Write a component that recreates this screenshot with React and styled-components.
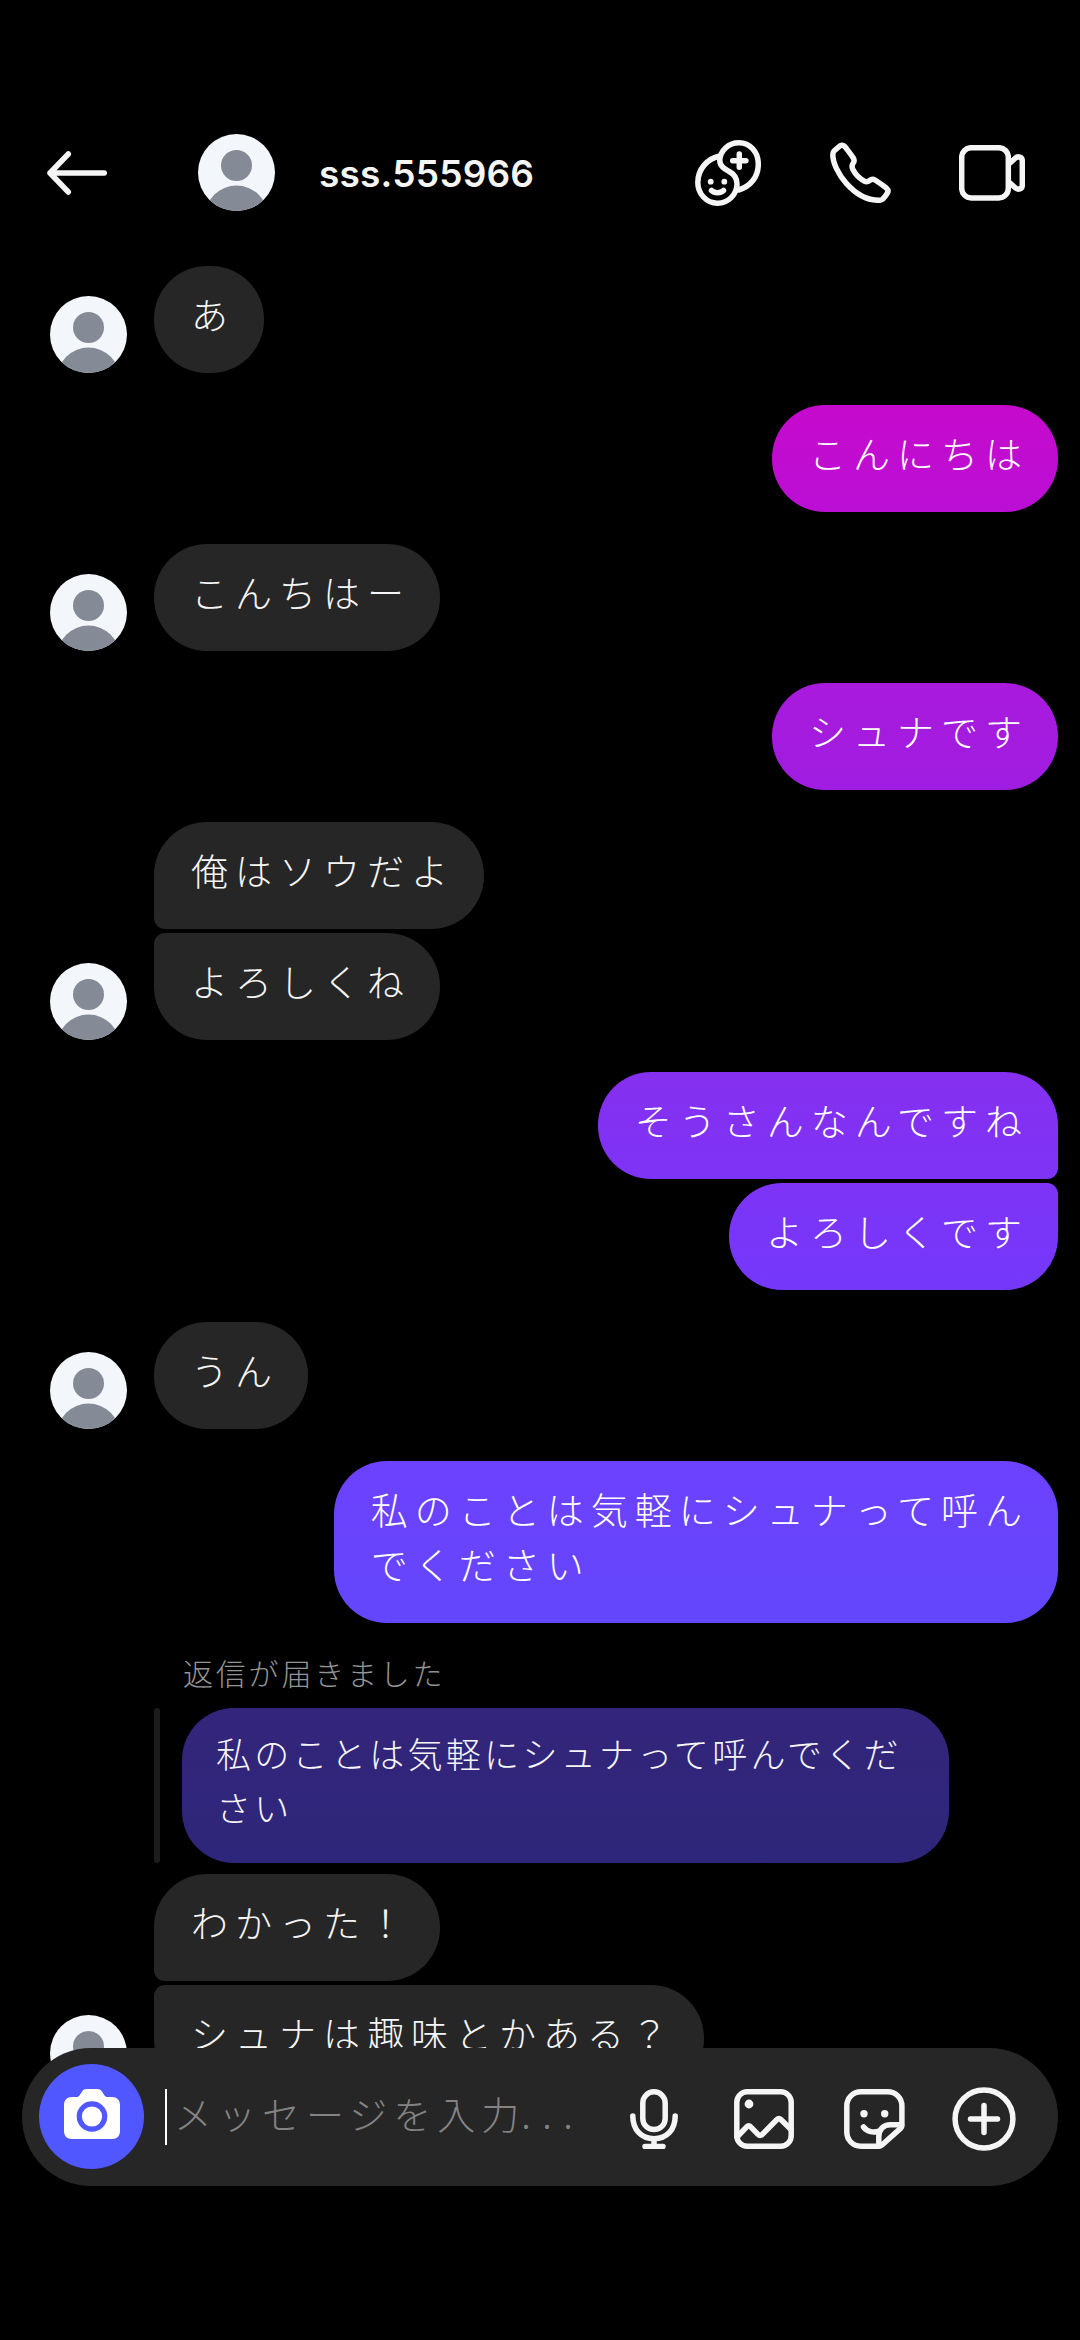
import styled, { createGlobalStyle } from 'styled-components';

const conversation = [
  { from: 'them', messages: ['あ'] },
  { from: 'me', messages: ['こんにちは'] },
  { from: 'them', messages: ['こんちはー'] },
  { from: 'me', messages: ['シュナです'] },
  { from: 'them', messages: ['俺はソウだよ', 'よろしくね'] },
  { from: 'me', messages: ['そうさんなんですね', 'よろしくです'] },
  { from: 'them', messages: ['うん'] },
  { from: 'me', messages: ['私のことは気軽にシュナって呼ん\nでください'] },
  {
    from: 'them',
    reply: {
      label: '返信が届きました',
      text: '私のことは気軽にシュナって呼んでくだ\nさい',
    },
    messages: ['わかった！', 'シュナは趣味とかある？'],
  },
];

function Avatar() {
  return (
    <AvatarCircle>
      <svg width="77" height="77" viewBox="0 0 77 77" fill="#858b96">
        <circle cx="38.5" cy="31.5" r="15.5" />
        <circle cx="38.5" cy="83" r="31.5" />
      </svg>
    </AvatarCircle>
  );
}

function BackIcon() {
  return (
    <LineIcon width="60" height="44" viewBox="0 0 60 44">
      <path d="M57.3 22H3M21.3 3L3 22l18.3 19" />
    </LineIcon>
  );
}

function AddPeopleIcon() {
  return (
    <LineIcon width="66" height="66" viewBox="0 0 66 66">
      <path d="M24.8 16C12.5 18.5 2.8 29 2.8 42.5a19.6 20.7 0 0 0 19.7 20.7A19.4 19.4 0 0 0 42 44c0-5.5-2.5-9.5-7-12-6-3.3-10.200-6-10.200-11.500A19.2 18 0 0 1 44 2.800c11 0 19.300 9.200 19.300 21.200 0 13-7.800 22.500-19.800 26" />
      <path d="M37.7 20.7h13.2M44.3 14.1v13.2M16.5 50.5c3 3 9 3 12 0" />
      <g fill="#f5f5f5" stroke="none">
        <circle cx="15.7" cy="41.7" r="2.9" />
        <circle cx="29.3" cy="41.7" r="2.9" />
      </g>
    </LineIcon>
  );
}

function PhoneIcon() {
  return (
    <LineIcon width="61" height="61" viewBox="0 0 61 61">
      <path d="M9.5 4.2C11 2.7 13.5 2.8 14.8 4.5c3 3.8 6 7.5 8.5 11.5 1.3 2 .9 3.5-.1 5-1.4 2-1.5 4-.4 6.3 2.7 5.2 6.7 9.5 11.7 11.9 2 1 3.5.6 5.3-.9 1.5-1.3 3.2-1.5 5.2-.3 4 2.5 8 5.3 11.5 8.2 1.8 1.6 2 3.1.7 5.1-1.2 2-2.7 4-4.4 5.700-1 .9-2.3 1.3-3.8 1.3C24 58.3 2.8 29 2.8 12.5c0-1.5.5-2.7 1.500-3.700z" />
    </LineIcon>
  );
}

function VideoIcon() {
  return (
    <LineIcon width="66" height="56" viewBox="0 0 66 56">
      <rect x="2.7" y="2.7" width="46.6" height="50.2" rx="9.5" />
      <path d="M51 18l5.5-5c2.5-2.2 6.8-1 6.8 2.8v24.4c0 3.8-4.3 5-6.8 2.8L51 38" />
    </LineIcon>
  );
}

function CameraIcon() {
  return (
    <svg width="56" height="50" viewBox="0 0 56 50">
      <path
        fill="#fff"
        d="M8 8h4c2 0 3-.8 4-2.3l2-3.2C19.2.8 20.5 0 22.5 0h11c2 0 3.3.8 4.5 2.5l2 3.2C41 7.2 42 8 44 8h4c5 0 8 3 8 8v26c0 5-3 8-8 8H8c-5 0-8-3-8-8V16c0-5 3-8 8-8z"
      />
      <circle cx="28" cy="27.5" r="12.7" fill="#fff" stroke="#5157ff" strokeWidth="5.2" />
    </svg>
  );
}

function MicIcon() {
  return (
    <LineIcon width="48" height="60" viewBox="0 0 48 60">
      <rect x="12.8" y="2.8" width="22.4" height="37.8" rx="11.2" />
      <path d="M2.8 27C2.8 40.5 11 49.7 24 49.7S45.2 40.5 45.2 27M24 50v7M15 57.400h18" />
    </LineIcon>
  );
}

function PictureIcon() {
  return (
    <LineIcon width="60" height="60" viewBox="0 0 60 60">
      <rect x="2.8" y="2.8" width="54.4" height="54.4" rx="10.5" />
      <path d="M3 48l9.7-10.200q2-2.200 4 0l7.300 7.500q2.200 2.200 4.400 0l14.300-14.500q2.200-2.200 4.400 0L57 40.500" />
      <circle cx="15" cy="15" r="4.4" fill="#f5f5f5" stroke="none" />
    </LineIcon>
  );
}

function StickerIcon() {
  return (
    <LineIcon width="61" height="60" viewBox="0 0 61 60">
      <path d="M34.5 57.2H17C9 57.2 2.8 51 2.8 43V17C2.8 9 9 2.8 17 2.8h26.7c8 0 14.2 6.2 14.2 14.2v19.5c0 1-.4 1.9-1.1 2.6L38 56c-.9.8-2.2 1.2-3.5 1.2z" />
      <path d="M34.8 57v-9.5c0-7 4.7-11.8 11.700-11.800H57.500M19.500 38c3.500 4.700 10 6.500 16.300 3.700" />
      <g fill="#f5f5f5" stroke="none">
        <circle cx="20" cy="24.7" r="3.7" />
        <circle cx="40.7" cy="24.7" r="3.7" />
      </g>
    </LineIcon>
  );
}

function PlusIcon() {
  return (
    <LineIcon width="64" height="64" viewBox="0 0 64 64">
      <circle cx="32" cy="32" r="28.9" />
      <path d="M18.5 32h27M32 18.5v27" />
    </LineIcon>
  );
}

function MessageGroup({ from, reply, messages }) {
  const mine = from === 'me';
  return (
    <Row $mine={mine}>
      {!mine && <Avatar />}
      <Stack $mine={mine}>
        {reply && (
          <ReplyBlock>
            <ReplyLabel>{reply.label}</ReplyLabel>
            <ReplyQuote>
              <ReplyBar />
              <ReplyBubble>{reply.text}</ReplyBubble>
            </ReplyQuote>
          </ReplyBlock>
        )}
        {messages.map((text, idx) => (
          <Bubble
            key={text}
            $mine={mine}
            $joinTop={idx > 0}
            $joinBottom={idx < messages.length - 1}
          >
            {text}
          </Bubble>
        ))}
      </Stack>
    </Row>
  );
}

function App() {
  return (
    <>
      <GlobalStyle />
      <Screen>
        <Header>
          <BackIcon />
          <Profile>
            <Avatar />
            <UserName>sss.555966</UserName>
          </Profile>
          <HeaderActions>
            <IconCell $size={66}><AddPeopleIcon /></IconCell>
            <IconCell $size={66}><PhoneIcon /></IconCell>
            <IconCell $size={66}><VideoIcon /></IconCell>
          </HeaderActions>
        </Header>

        <MessageList>
          {conversation.map((group, idx) => (
            <MessageGroup key={idx} {...group} />
          ))}
        </MessageList>

        <Composer>
          <CameraButton><CameraIcon /></CameraButton>
          <Caret />
          <Placeholder>メッセージを入力<Dots>...</Dots></Placeholder>
          <ComposerActions>
            <IconCell $size={64}><MicIcon /></IconCell>
            <IconCell $size={64}><PictureIcon /></IconCell>
            <IconCell $size={64}><StickerIcon /></IconCell>
            <IconCell $size={64}><PlusIcon /></IconCell>
          </ComposerActions>
        </Composer>
      </Screen>
    </>
  );
}

const GlobalStyle = createGlobalStyle`
  * {
    box-sizing: border-box;
  }

  body {
    margin: 0;
    background: #000;
    font-family: 'Noto Sans CJK JP', sans-serif;
  }
`;

const Screen = styled.div`
  position: relative;
  width: 1080px;
  height: 2340px;
  overflow: hidden;
  background: #000;
  color: #f5f5f5;
`;

const Header = styled.header`
  display: flex;
  align-items: center;
  height: 245px;
  padding: 100px 55px 0 47px;
`;

const Profile = styled.div`
  display: flex;
  align-items: center;
  gap: 44px;
  margin-left: 91px;
`;

const UserName = styled.span`
  padding-top: 2px;
  font-family: 'Inter', sans-serif;
  font-size: 37px;
  font-weight: 600;
  letter-spacing: 0.2px;
  line-height: 50px;
`;

const HeaderActions = styled.div`
  display: flex;
  gap: 66px;
  margin-left: auto;
`;

const IconCell = styled.div`
  display: flex;
  align-items: center;
  justify-content: center;
  width: ${({ $size }) => $size}px;
  height: ${({ $size }) => $size}px;
`;

const LineIcon = styled.svg`
  display: block;
  fill: none;
  stroke: #f5f5f5;
  stroke-width: 5.5;
  stroke-linecap: round;
  stroke-linejoin: round;
`;

const AvatarCircle = styled.div`
  flex-shrink: 0;
  width: 77px;
  height: 77px;
  border-radius: 50%;
  overflow: hidden;
  background: #f3f6fa;

  svg {
    display: block;
  }
`;

const MessageList = styled.main`
  display: flex;
  flex-direction: column;
  gap: 32px;
  padding: 21px 22px 0 50px;
`;

const Row = styled.div`
  display: flex;
  align-items: flex-end;
  justify-content: ${({ $mine }) => ($mine ? 'flex-end' : 'flex-start')};
  gap: 27px;
`;

const Stack = styled.div`
  display: flex;
  flex-direction: column;
  align-items: ${({ $mine }) => ($mine ? 'flex-end' : 'flex-start')};
  gap: 4px;
`;

const Bubble = styled.div`
  padding: 21px 29px 31px 37px;
  border-radius: 53px;
  background: #262626;
  font-size: 37px;
  font-weight: 300;
  letter-spacing: 7px;
  line-height: 55px;
  white-space: pre;

  /* outgoing bubbles share one gradient that runs down the whole screen */
  ${({ $mine }) => $mine && `
    color: #fff;
    background: linear-gradient(
      #c60acc 405px,
      #bb0fd6 512px,
      #a91adc 683px,
      #9f1de1 790px,
      #862ff0 1072px,
      #7438fb 1290px,
      #6d41fd 1461px,
      #6347fc 1623px
    ) fixed;
  `}

  ${({ $mine, $joinTop }) => $joinTop && `border-top-${$mine ? 'right' : 'left'}-radius: 11px;`}
  ${({ $mine, $joinBottom }) => $joinBottom && `border-bottom-${$mine ? 'right' : 'left'}-radius: 11px;`}
`;

const ReplyBlock = styled.div`
  margin-bottom: 7px;
`;

const ReplyLabel = styled.div`
  height: 53px;
  padding-left: 29px;
  font-size: 30px;
  font-weight: 300;
  letter-spacing: 2.8px;
  line-height: 34px;
  color: #949494;
`;

const ReplyQuote = styled.div`
  display: flex;
  gap: 22px;
`;

const ReplyBar = styled.div`
  width: 6px;
  border-radius: 3px;
  background: #1c1c1c;
`;

const ReplyBubble = styled.div`
  width: 767px;
  height: 155px;
  padding: 18px 34px;
  border-radius: 52px;
  background: linear-gradient(#33257b, #2e267a);
  font-size: 35px;
  font-weight: 300;
  letter-spacing: 3.3px;
  line-height: 54px;
  white-space: pre;
`;

const Composer = styled.footer`
  position: absolute;
  left: 22px;
  right: 22px;
  bottom: 154px;
  display: flex;
  align-items: center;
  height: 138px;
  padding: 0 42px 0 17px;
  border-radius: 69px;
  background: #262626;
`;

const CameraButton = styled.div`
  display: flex;
  align-items: center;
  justify-content: center;
  width: 105px;
  height: 105px;
  margin-bottom: 1px;
  padding: 0 0 5px 1px;
  border-radius: 50%;
  background: #5157ff;
`;

const Caret = styled.div`
  width: 2px;
  height: 56px;
  margin-left: 21px;
  background: #fff;
`;

const Placeholder = styled.div`
  padding: 0 0 8px 7px;
  font-size: 38px;
  font-weight: 300;
  letter-spacing: 6px;
  line-height: 50px;
  white-space: nowrap;
  color: #838383;
`;

const Dots = styled.span`
  margin-left: -4px;
  letter-spacing: 11.5px;
`;

const ComposerActions = styled.div`
  display: flex;
  gap: 46px;
  margin-left: auto;
  padding-top: 4px;
`;

export default App;
